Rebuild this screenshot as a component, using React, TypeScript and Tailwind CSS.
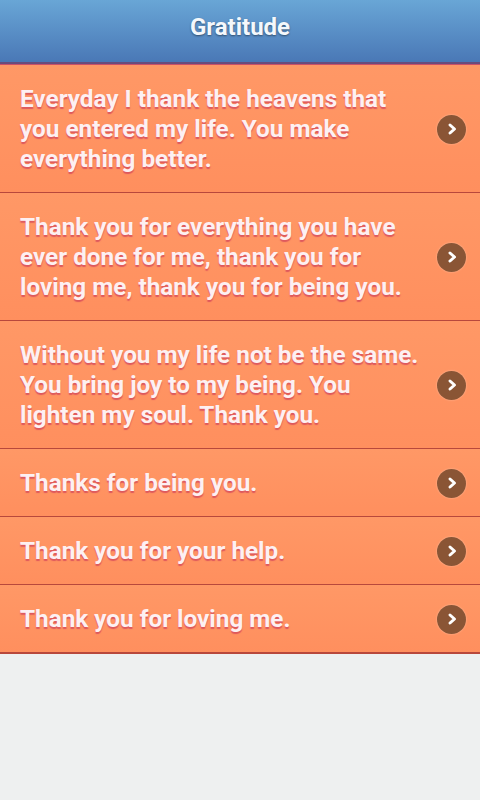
import React from "react";

const items = [
  "Everyday I thank the heavens that you entered my life. You make everything better.",
  "Thank you for everything you have ever done for me, thank you for loving me, thank you for being you.",
  "Without you my life not be the same. You bring joy to my being. You lighten my soul. Thank you.",
  "Thanks for being you.",
  "Thank you for your help.",
  "Thank you for loving me.",
];

function Chevron() {
  return (
    <div className="w-[29px] h-[29px] rounded-full bg-[#8a5535] flex items-center justify-center shrink-0 shadow-[0_0_2px_rgba(255,220,200,0.6)]">
      <svg width="14" height="14" viewBox="0 0 14 14">
        <path d="M5 3 L9.5 7 L5 11" stroke="#ffffff" strokeWidth="3" fill="none" strokeLinecap="round" strokeLinejoin="round" />
      </svg>
    </div>
  );
}

export default function App() {
  return (
    <div className="w-[480px] h-[800px] bg-[#eef0f0] flex flex-col" style={{ fontFamily: "Roboto, 'Liberation Sans', sans-serif" }}>
      <div className="h-[62px] pb-[8px] bg-gradient-to-b from-[#69a6d6] to-[#4a78b6] flex items-center justify-center">
        <span className="text-[#f4f8fc] font-bold text-[24px] [text-shadow:0_1px_2px_rgba(0,0,0,0.45)]">Gratitude</span>
      </div>
      <div className="h-[2px] bg-[#6a4c7c]" />
      <div className="h-[1px] bg-[#c8506a]" />
      <div className="flex flex-col">
        {items.map((t, i) => (
          <div
            key={i}
            className={`flex items-center pl-[20px] pr-[14px] pt-[19px] pb-[18px] bg-gradient-to-b from-[#ff9866] to-[#ff8f5e] border-b border-[#b8483c] ${i === items.length - 1 ? "border-b-2 border-[#a02a44]" : ""}`}
          >
            <p className="flex-1 text-[24.3px] leading-[30px] font-bold text-[#fdf0f2] [text-shadow:0_2px_1px_rgba(200,50,90,0.6)] pr-[14px]">
              {t}
            </p>
            <Chevron />
          </div>
        ))}
      </div>
    </div>
  );
}
